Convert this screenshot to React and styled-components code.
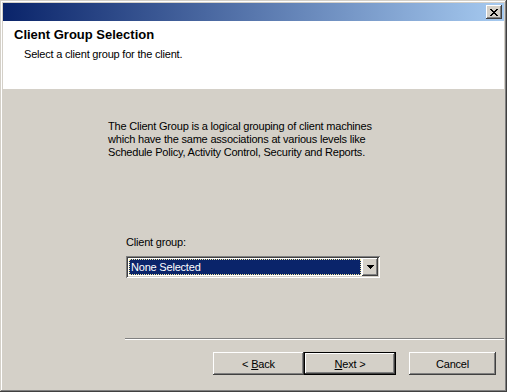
import React from 'react';
import styled, { createGlobalStyle } from 'styled-components';

const GlobalStyle = createGlobalStyle`
  html, body {
    margin: 0;
    padding: 0;
    background: #d4d0c8;
  }
  body {
    font-family: 'Liberation Sans', Arial, sans-serif;
    font-size: 11px;
    letter-spacing: -0.2px;
    color: #000;
  }
`;

const raised = `
  box-shadow: inset -1px -1px #404040, inset 1px 1px #ffffff,
    inset -2px -2px #808080, inset 2px 2px #d4d0c8;
`;

const Window = styled.div`
  width: 507px;
  height: 392px;
  box-sizing: border-box;
  padding: 3px;
  background: #d4d0c8;
  display: flex;
  flex-direction: column;
  box-shadow: inset -1px -1px #404040, inset 1px 1px #d4d0c8,
    inset -2px -2px #808080, inset 2px 2px #ffffff;
`;

const TitleBar = styled.div`
  height: 18px;
  flex: 0 0 auto;
  display: flex;
  align-items: center;
  justify-content: flex-end;
  padding-right: 2px;
  background: linear-gradient(to right, #0a246a, #a6caf0);
`;

const CloseButton = styled.div`
  width: 16px;
  height: 14px;
  box-sizing: border-box;
  background: #d4d0c8;
  display: flex;
  align-items: center;
  justify-content: center;
  ${raised}
`;

const Header = styled.div`
  height: 68px;
  flex: 0 0 auto;
  background: #ffffff;
  box-sizing: border-box;
  padding: 6px 0 0 11px;
`;

const Title = styled.div`
  font-weight: bold;
  font-size: 13px;
  letter-spacing: 0;
  line-height: 16px;
`;

const Subtitle = styled.div`
  margin: 5px 0 0 10px;
  line-height: 13px;
`;

const Body = styled.div`
  flex: 1 1 auto;
  display: flex;
  flex-direction: column;
  box-sizing: border-box;
  padding-top: 31px;
`;

const Description = styled.p`
  margin: 0 0 0 105px;
  line-height: 13px;
  width: 280px;
`;

const Field = styled.div`
  margin: 77px 0 0 123px;
  display: flex;
  flex-direction: column;
  gap: 7px;
`;

const Label = styled.div`
  line-height: 13px;
`;

const Combo = styled.div`
  width: 254px;
  height: 22px;
  box-sizing: border-box;
  padding: 2px;
  background: #ffffff;
  display: flex;
  box-shadow: inset 1px 1px #808080, inset -1px -1px #ffffff,
    inset 2px 2px #404040, inset -2px -2px #d4d0c8;
`;

const ComboValue = styled.div`
  flex: 1 1 auto;
  margin: 1px;
  background: #0a246a;
  color: #ffffff;
  line-height: 16px;
  padding-left: 2px;
  outline: 1px dotted #f4e89c;
  outline-offset: -1px;
`;

const ComboArrow = styled.div`
  width: 16px;
  flex: 0 0 auto;
  background: #d4d0c8;
  display: flex;
  align-items: center;
  justify-content: center;
  ${raised}
`;

const Spacer = styled.div`
  flex: 1 1 auto;
`;

const Separator = styled.div`
  margin-left: 122px;
  height: 1px;
  background: #808080;
  border-bottom: 1px solid #ffffff;
`;

const ButtonRow = styled.div`
  display: flex;
  padding: 12px 8px 14px 210px;
`;

const Button = styled.div`
  width: ${(p) => p.$width}px;
  height: 23px;
  margin-left: ${(p) => p.$gap || 0}px;
  box-sizing: border-box;
  display: flex;
  align-items: center;
  justify-content: center;
  background: #d4d0c8;
  ${raised}
  &.default {
    border: 1px solid #000000;
  }
  u {
    text-decoration: underline;
    text-underline-offset: 1px;
  }
`;

const CloseGlyph = () => (
  <svg width="8" height="7" viewBox="0 0 8 7" shapeRendering="crispEdges">
    <path
      fill="#000"
      d="M0 0h2v1H0zM6 0h2v1H6zM1 1h2v1H1zM5 1h2v1H5zM2 2h4v1H2zM3 3h2v1H3zM2 4h4v1H2zM1 5h2v1H1zM5 5h2v1H5zM0 6h2v1H0zM6 6h2v1H6z"
    />
  </svg>
);

const ArrowGlyph = () => (
  <svg width="7" height="4" viewBox="0 0 7 4" shapeRendering="crispEdges">
    <path fill="#000" d="M0 0h7v1H0zM1 1h5v1H1zM2 2h3v1H2zM3 3h1v1H3z" />
  </svg>
);

export default function App() {
  return (
    <>
      <GlobalStyle />
      <Window>
        <TitleBar>
          <CloseButton>
            <CloseGlyph />
          </CloseButton>
        </TitleBar>
        <Header>
          <Title>Client Group Selection</Title>
          <Subtitle>Select a client group for the client.</Subtitle>
        </Header>
        <Body>
          <Description>
            The Client Group is a logical grouping of client machines which
            have the same associations at various levels like Schedule Policy,
            Activity Control, Security and Reports.
          </Description>
          <Field>
            <Label>Client group:</Label>
            <Combo>
              <ComboValue>None Selected</ComboValue>
              <ComboArrow>
                <ArrowGlyph />
              </ComboArrow>
            </Combo>
          </Field>
          <Spacer />
          <Separator />
          <ButtonRow>
            <Button $width={91}>
              &lt;&nbsp;<u>B</u>ack
            </Button>
            <Button className="default" $width={92}>
              <u>N</u>ext&nbsp;&gt;
            </Button>
            <Button $width={87} $gap={13}>
              Cancel
            </Button>
          </ButtonRow>
        </Body>
      </Window>
    </>
  );
}
